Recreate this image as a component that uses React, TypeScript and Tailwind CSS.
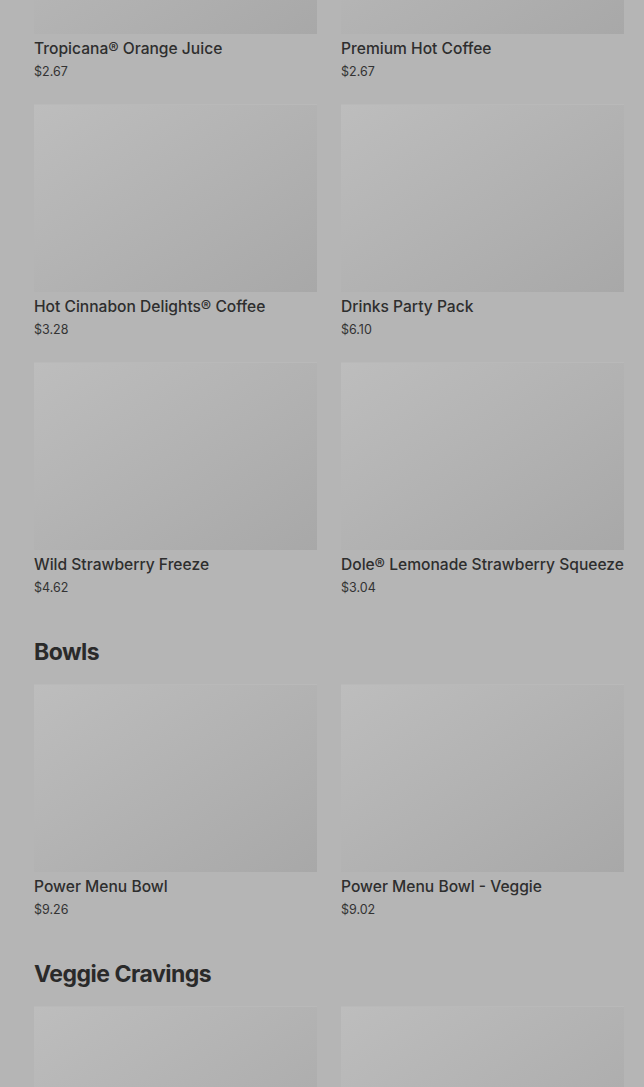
import React from "react";

type Item = { name: string; price: string };

const drinks: Item[] = [
  { name: "Tropicana® Orange Juice", price: "$2.67" },
  { name: "Premium Hot Coffee", price: "$2.67" },
  { name: "Hot Cinnabon Delights® Coffee", price: "$3.28" },
  { name: "Drinks Party Pack", price: "$6.10" },
  { name: "Wild Strawberry Freeze", price: "$4.62" },
  { name: "Dole® Lemonade Strawberry Squeeze", price: "$3.04" },
];

const bowls: Item[] = [
  { name: "Power Menu Bowl", price: "$9.26" },
  { name: "Power Menu Bowl - Veggie", price: "$9.02" },
];

function Picture() {
  return <div className="h-[188px] w-full bg-gradient-to-br from-[#bdbdbd] to-[#a8a8a8] border-t border-[#b9b9b9]" />;
}

function Card({ item }: { item: Item }) {
  return (
    <div className="flex flex-col">
      <Picture />
      <div className="mt-[4px] text-[15.6px] leading-[22px] font-medium text-[#2e2e2e] whitespace-nowrap">
        {item.name}
      </div>
      <div className="mt-[3px] text-[12.5px] leading-[18px] text-[#333333]">{item.price}</div>
    </div>
  );
}

function Grid({ items }: { items: Item[] }) {
  return (
    <div className="grid grid-cols-2 gap-x-[24px] gap-y-[23px]">
      {items.map((it) => (
        <Card key={it.name} item={it} />
      ))}
    </div>
  );
}

function Heading({ children }: { children: React.ReactNode }) {
  return (
    <h2 className="mt-[39px] mb-[16px] text-[23px] leading-[32px] font-bold tracking-[-0.5px] text-[#2a2a2a]">
      {children}
    </h2>
  );
}

export default function App() {
  return (
    <div
      className="h-[1087px] w-[644px] overflow-hidden bg-[#b5b5b5]"
      style={{ fontFamily: "Inter, 'Noto Sans', sans-serif" }}
    >
      <div className="mt-[-154px] pl-[34px] pr-[20px]">
        <Grid items={drinks} />
        <Heading>Bowls</Heading>
        <Grid items={bowls} />
        <Heading>Veggie Cravings</Heading>
        <div className="grid grid-cols-2 gap-x-[24px]">
          <Picture />
          <Picture />
        </div>
      </div>
    </div>
  );
}
